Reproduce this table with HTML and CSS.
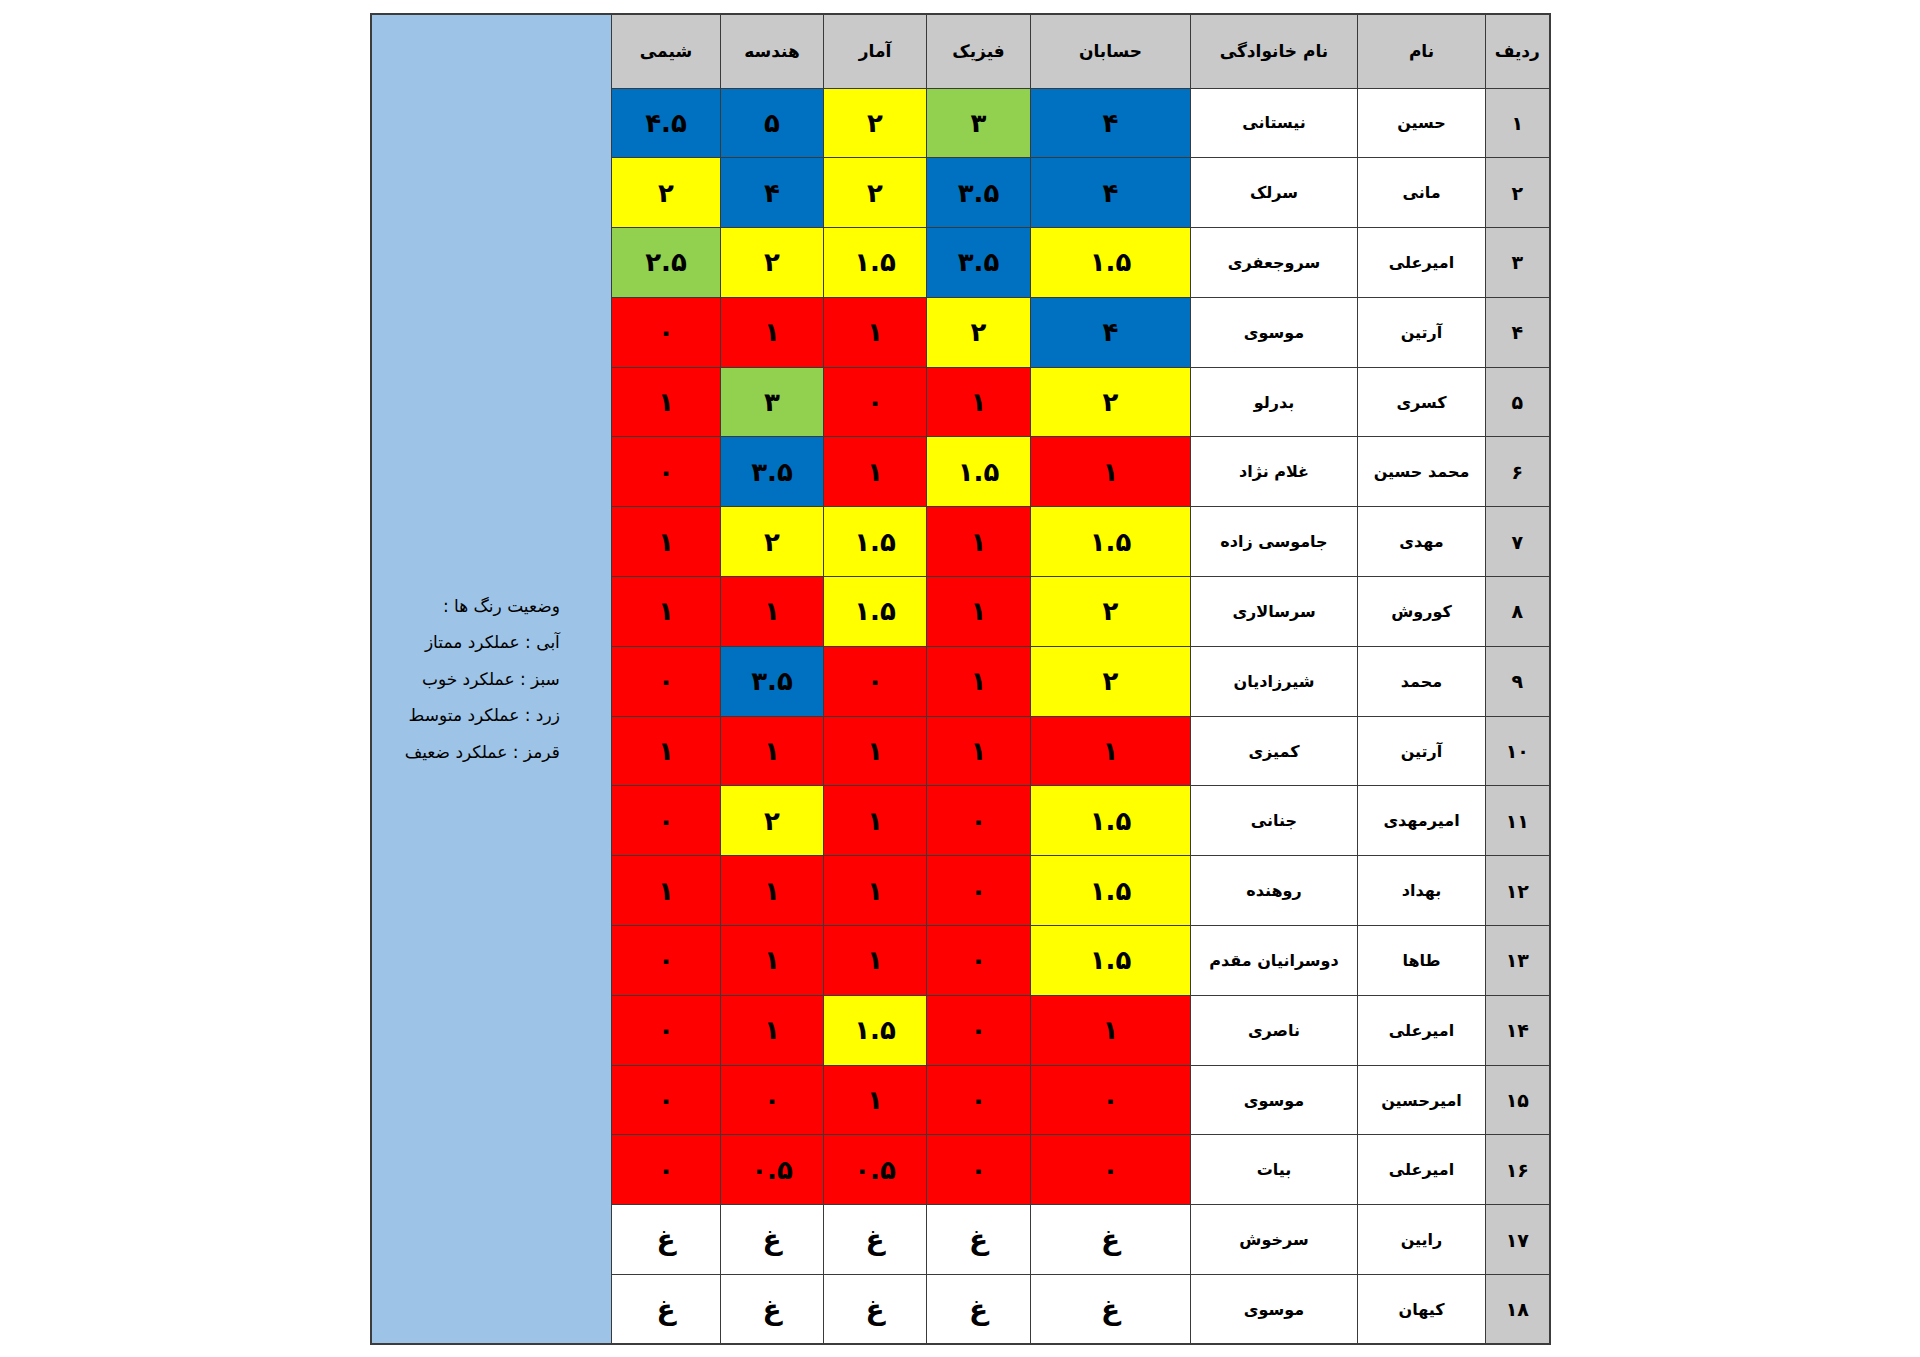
FILE: index.html
```html
<!DOCTYPE html>
<html lang="fa">
<head>
<meta charset="utf-8">
<title>جدول نمرات</title>
<link rel="stylesheet" href="styles.css">
</head>
<body>
<table class="grades" dir="rtl">
  <colgroup>
    <col class="w-idx"><col class="w-name"><col class="w-family"><col class="w-hesaban"><col class="w-fizik"><col class="w-amar"><col class="w-hendese"><col class="w-shimi"><col class="w-legend">
  </colgroup>
  <tr class="head">
    <th>ردیف</th><th>نام</th><th>نام خانوادگی</th><th>حسابان</th><th>فیزیک</th><th>آمار</th><th>هندسه</th><th>شیمی</th>
    <td class="legend" rowspan="19">
      <div class="legend-box">
        <div>وضعیت رنگ ها :</div>
        <div>آبی : عملکرد ممتاز</div>
        <div>سبز : عملکرد خوب</div>
        <div>زرد : عملکرد متوسط</div>
        <div>قرمز : عملکرد ضعیف</div>
      </div>
    </td>
  </tr>
  <tr><td class="idx">۱</td><td class="nm">حسین</td><td class="nm">نیستانی</td><td class="sc b">۴</td><td class="sc g">۳</td><td class="sc y">۲</td><td class="sc b">۵</td><td class="sc b">۴.۵</td></tr>
  <tr><td class="idx">۲</td><td class="nm">مانی</td><td class="nm">سرلک</td><td class="sc b">۴</td><td class="sc b">۳.۵</td><td class="sc y">۲</td><td class="sc b">۴</td><td class="sc y">۲</td></tr>
  <tr><td class="idx">۳</td><td class="nm">امیرعلی</td><td class="nm">سروجعفری</td><td class="sc y">۱.۵</td><td class="sc b">۳.۵</td><td class="sc y">۱.۵</td><td class="sc y">۲</td><td class="sc g">۲.۵</td></tr>
  <tr><td class="idx">۴</td><td class="nm">آرتین</td><td class="nm">موسوی</td><td class="sc b">۴</td><td class="sc y">۲</td><td class="sc r">۱</td><td class="sc r">۱</td><td class="sc r">۰</td></tr>
  <tr><td class="idx">۵</td><td class="nm">کسری</td><td class="nm">بدرلو</td><td class="sc y">۲</td><td class="sc r">۱</td><td class="sc r">۰</td><td class="sc g">۳</td><td class="sc r">۱</td></tr>
  <tr><td class="idx">۶</td><td class="nm">محمد حسین</td><td class="nm">غلام نژاد</td><td class="sc r">۱</td><td class="sc y">۱.۵</td><td class="sc r">۱</td><td class="sc b">۳.۵</td><td class="sc r">۰</td></tr>
  <tr><td class="idx">۷</td><td class="nm">مهدی</td><td class="nm">جاموسی زاده</td><td class="sc y">۱.۵</td><td class="sc r">۱</td><td class="sc y">۱.۵</td><td class="sc y">۲</td><td class="sc r">۱</td></tr>
  <tr><td class="idx">۸</td><td class="nm">کوروش</td><td class="nm">سرسالاری</td><td class="sc y">۲</td><td class="sc r">۱</td><td class="sc y">۱.۵</td><td class="sc r">۱</td><td class="sc r">۱</td></tr>
  <tr><td class="idx">۹</td><td class="nm">محمد</td><td class="nm">شیرزادیان</td><td class="sc y">۲</td><td class="sc r">۱</td><td class="sc r">۰</td><td class="sc b">۳.۵</td><td class="sc r">۰</td></tr>
  <tr><td class="idx">۱۰</td><td class="nm">آرتین</td><td class="nm">کمیزی</td><td class="sc r">۱</td><td class="sc r">۱</td><td class="sc r">۱</td><td class="sc r">۱</td><td class="sc r">۱</td></tr>
  <tr><td class="idx">۱۱</td><td class="nm">امیرمهدی</td><td class="nm">جنانی</td><td class="sc y">۱.۵</td><td class="sc r">۰</td><td class="sc r">۱</td><td class="sc y">۲</td><td class="sc r">۰</td></tr>
  <tr><td class="idx">۱۲</td><td class="nm">بهداد</td><td class="nm">روهنده</td><td class="sc y">۱.۵</td><td class="sc r">۰</td><td class="sc r">۱</td><td class="sc r">۱</td><td class="sc r">۱</td></tr>
  <tr><td class="idx">۱۳</td><td class="nm">طاها</td><td class="nm">دوسرانیان مقدم</td><td class="sc y">۱.۵</td><td class="sc r">۰</td><td class="sc r">۱</td><td class="sc r">۱</td><td class="sc r">۰</td></tr>
  <tr><td class="idx">۱۴</td><td class="nm">امیرعلی</td><td class="nm">ناصری</td><td class="sc r">۱</td><td class="sc r">۰</td><td class="sc y">۱.۵</td><td class="sc r">۱</td><td class="sc r">۰</td></tr>
  <tr><td class="idx">۱۵</td><td class="nm">امیرحسین</td><td class="nm">موسوی</td><td class="sc r">۰</td><td class="sc r">۰</td><td class="sc r">۱</td><td class="sc r">۰</td><td class="sc r">۰</td></tr>
  <tr><td class="idx">۱۶</td><td class="nm">امیرعلی</td><td class="nm">بیات</td><td class="sc r">۰</td><td class="sc r">۰</td><td class="sc r">۰.۵</td><td class="sc r">۰.۵</td><td class="sc r">۰</td></tr>
  <tr><td class="idx">۱۷</td><td class="nm">رایین</td><td class="nm">سرخوش</td><td class="sc w">غ</td><td class="sc w">غ</td><td class="sc w">غ</td><td class="sc w">غ</td><td class="sc w">غ</td></tr>
  <tr><td class="idx">۱۸</td><td class="nm">کیهان</td><td class="nm">موسوی</td><td class="sc w">غ</td><td class="sc w">غ</td><td class="sc w">غ</td><td class="sc w">غ</td><td class="sc w">غ</td></tr>
</table>
</body>
</html>
```
FILE: styles.css
```css
html, body {
  margin: 0;
  padding: 0;
  background: #ffffff;
}
body {
  padding-top: 13px;
  font-family: "DejaVu Sans", "Noto Sans", sans-serif;
  color: #000;
}
.grades {
  margin: 0 auto;
  width: 1179px;
  table-layout: fixed;
  border-collapse: collapse;
  border: 2px solid #3c3c3c;
}
.w-legend { width: 241px; }
.w-shimi { width: 109px; }
.w-hendese { width: 103px; }
.w-amar { width: 103px; }
.w-fizik { width: 104px; }
.w-hesaban { width: 160px; }
.w-family { width: 167px; }
.w-name { width: 128px; }
.w-idx { width: 64px; }

.grades th,
.grades td {
  border: 1px solid #3a3a3a;
  padding: 0;
  text-align: center;
  vertical-align: middle;
}
.grades tr { height: 69.8px; }
.grades tr.head { height: 74px; }
.grades th {
  background: #c9c9c9;
  font-size: 17px;
  font-weight: bold;
}
.idx {
  background: #c9c9c9;
  font-size: 19px;
  font-weight: bold;
}
.nm {
  background: #ffffff;
  font-size: 16px;
  font-weight: bold;
}
.sc {
  font-size: 26px;
  font-weight: bold;
}
.sc.b { background: #0070c0; }
.sc.g { background: #92d050; }
.sc.y { background: #ffff00; }
.sc.r { background: #ff0000; }
.sc.w { background: #ffffff; font-size: 28px; }

.legend {
  background: #9dc3e6;
}
.legend-box {
  display: inline-block;
  text-align: right;
  font-size: 17px;
  line-height: 36.5px;
  margin-right: 18px;
}
```
